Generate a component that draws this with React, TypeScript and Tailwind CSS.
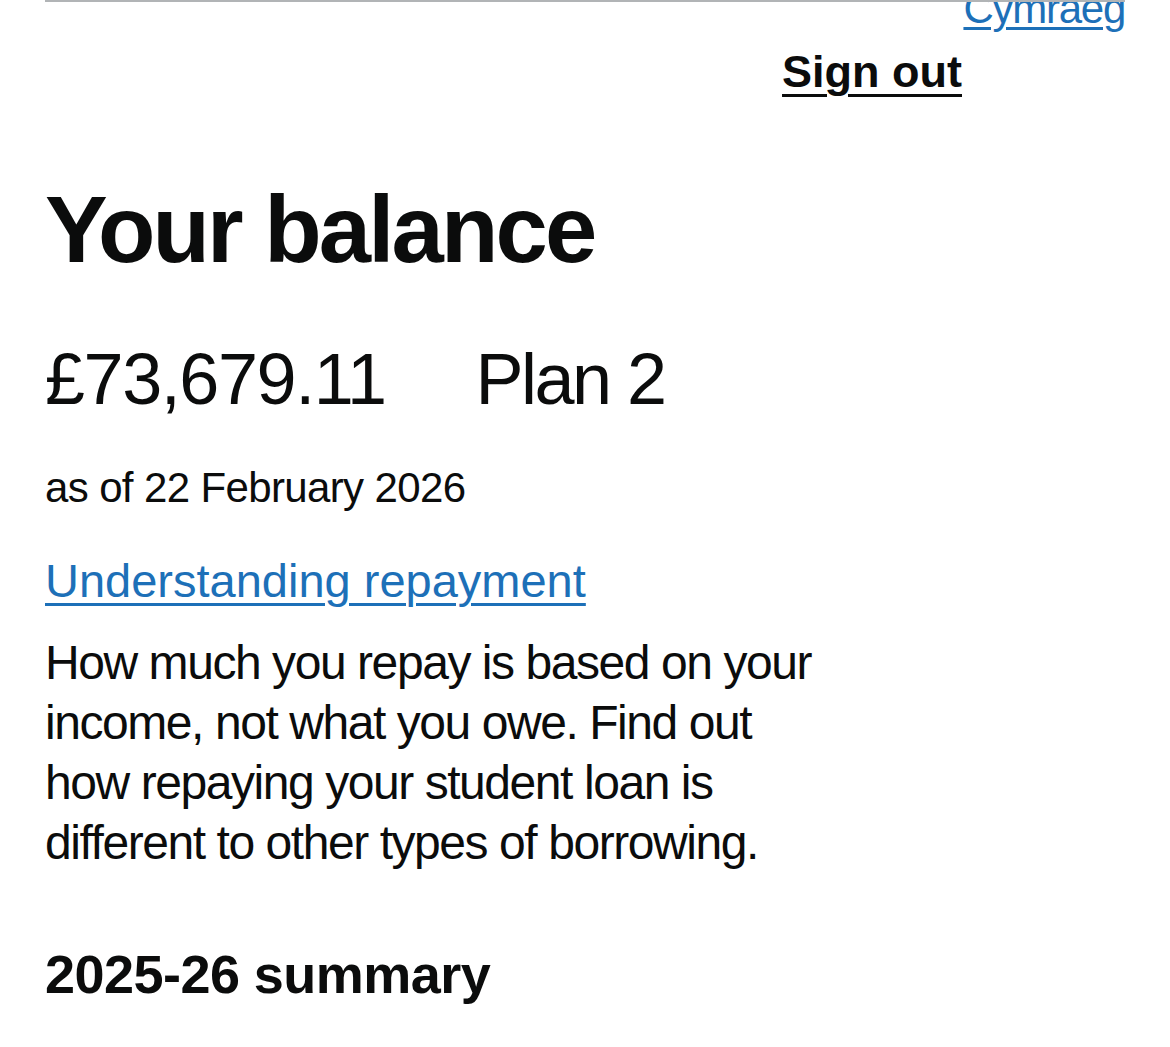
import React from "react";

const font = { fontFamily: '"Liberation Sans", Arial, sans-serif' };

export default function App() {
  return (
    <div className="min-h-screen bg-white text-[#0b0c0c]" style={font}>
      {/* Header rule + language toggle */}
      <div className="relative z-10 mx-[45px] h-[2px] bg-[#b1b4b6]" />
      <div className="-mt-[14px] flex justify-end px-[45px]">
        <a
          href="#"
          className="text-[42px] leading-[42px] tracking-[-0.03em] text-[#1d70b8] underline decoration-[3px] underline-offset-[4px]"
        >
          Cymraeg
        </a>
      </div>

      <div className="mt-[17px] flex justify-end pr-[208px]">
        <a
          href="#"
          className="text-[45px] font-bold leading-[50px] text-[#0b0c0c] underline decoration-[3px] underline-offset-[7px]"
        >
          Sign out
        </a>
      </div>

      <main className="px-[45px]">
        <h1 className="mt-[80px] text-[94px] font-bold leading-[105px] tracking-[-0.03em]">
          Your balance
        </h1>

        <div className="mt-[60px] flex gap-[90px] text-[72px] leading-[75px] tracking-[-0.02em]">
          <span>£73,679.11</span>
          <span className="tracking-[-0.035em]">Plan 2</span>
        </div>

        <p className="mt-[41px] text-[42px] leading-[60px] tracking-[-0.015em]">
          as of 22 February 2026
        </p>

        <a
          href="#"
          className="mt-[33px] block w-fit text-[47px] leading-[60px] text-[#1d70b8] underline decoration-[3px] underline-offset-[6px]"
        >
          Understanding repayment
        </a>

        <p className="mt-[22px] w-[790px] text-[48px] leading-[60px] tracking-[-0.03em]">
          How much you repay is based on your income, not what you owe. Find
          out how repaying your student loan is different to other types of
          borrowing.
        </p>

        <h2 className="mt-[71px] text-[54px] font-bold leading-[60px] tracking-[-0.01em]">
          2025-26 summary
        </h2>
      </main>
    </div>
  );
}
